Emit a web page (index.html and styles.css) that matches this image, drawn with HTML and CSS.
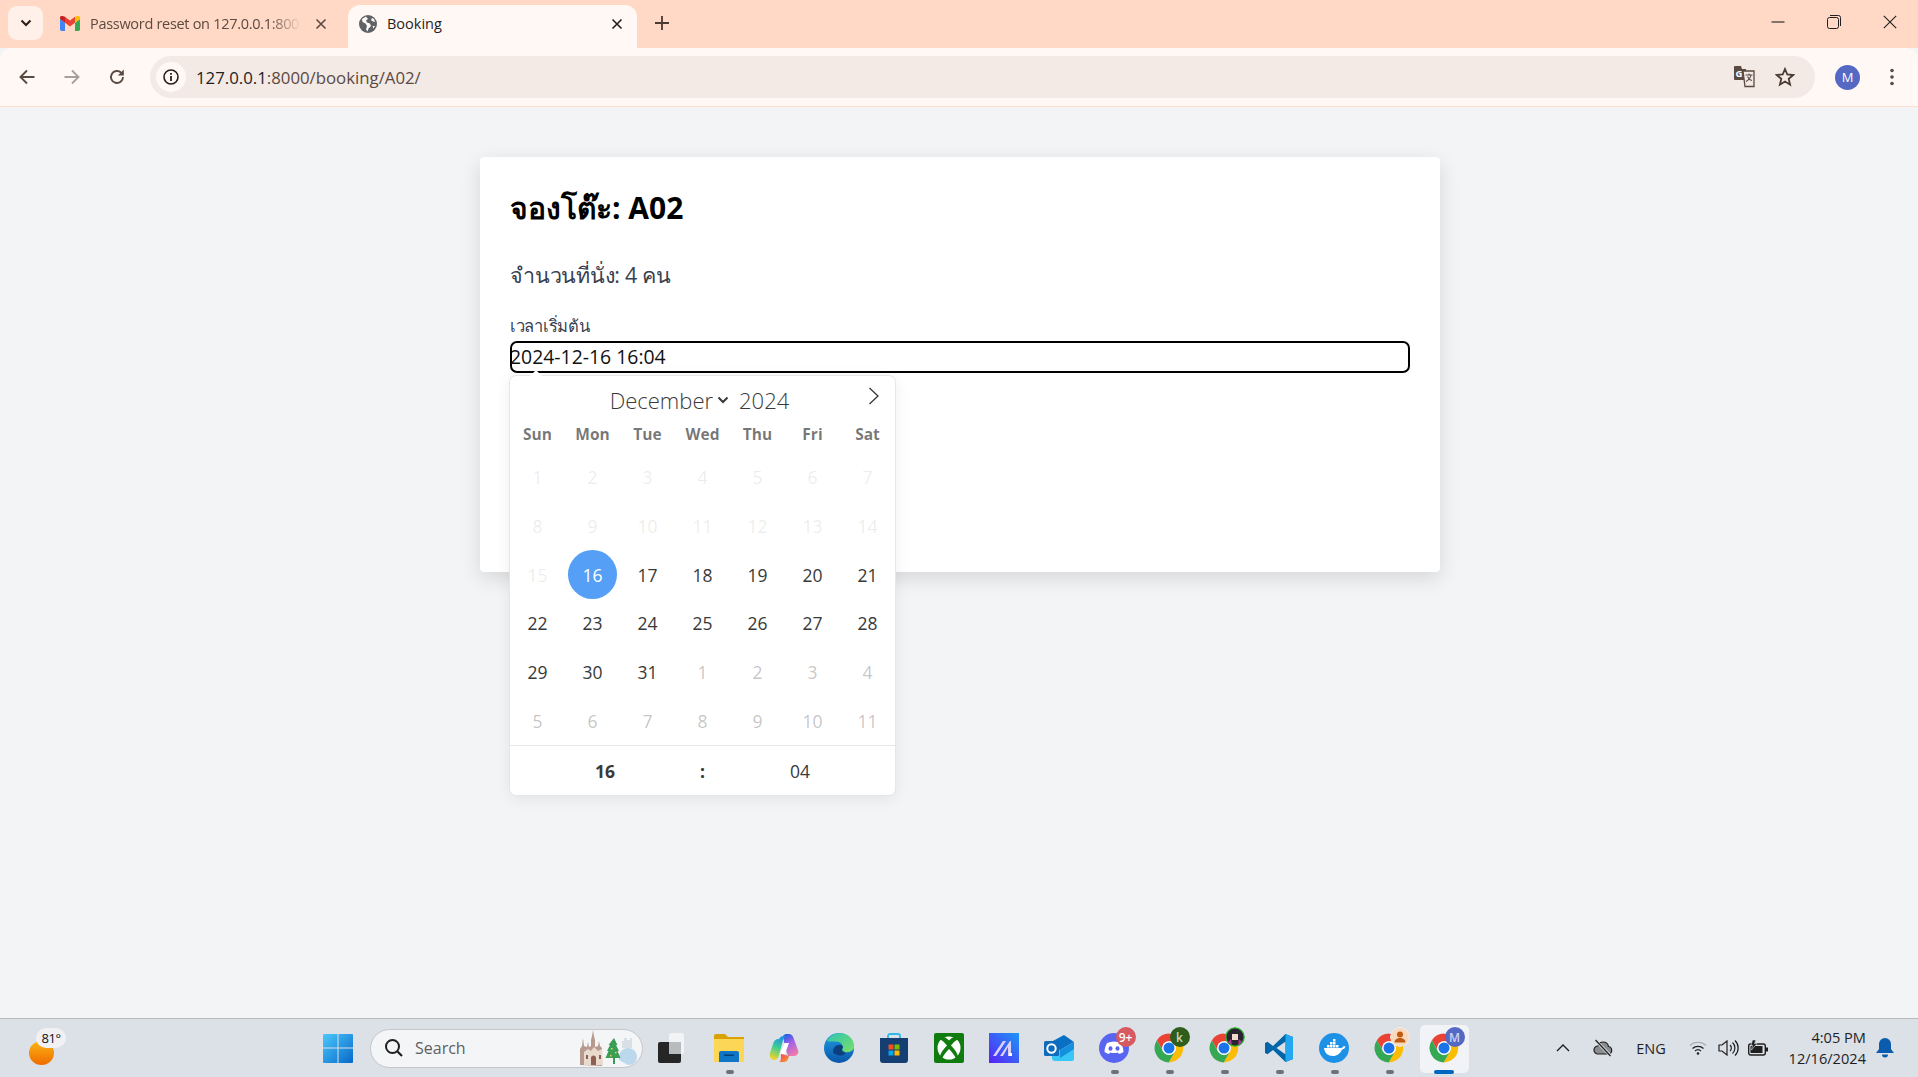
FILE: index.html
```html
<!DOCTYPE html>
<html lang="th">
<head>
    <meta charset="UTF-8">
    <title>Booking</title>
    <link rel="stylesheet" href="styles.css">
</head>
<body>
    <svg class="defs" width="0" height="0">
        <symbol id="chrome" viewBox="0 0 48 48">
            <path fill="#ea4335" d="M24 1A23 23 0 0 0 4.6 11.6L14.5 29A11 11 0 0 1 24 13H44A23 23 0 0 0 24 1Z"/>
            <path fill="#fbbc04" d="M44 13H24A11 11 0 0 1 33.5 29.5L23.5 47A23 23 0 0 0 44 13Z"/>
            <path fill="#34a853" d="M4.6 11.6A23 23 0 0 0 23.5 47L33.5 29.5A11 11 0 0 1 14.5 29.5Z"/>
            <circle cx="24" cy="24" r="11" fill="#fff"/>
            <circle cx="24" cy="24" r="8.8" fill="#1a73e8"/>
        </symbol>
    </svg>

    <header class="tabstrip">
        <button class="tab-search">
            <svg width="12" height="8" viewBox="0 0 12 8"><path d="M1.5 1.5 6 6l4.5-4.5" fill="none" stroke="#2b1d16" stroke-width="2"/></svg>
        </button>
        <div class="tab">
            <svg class="tab-icon gmail" width="20" height="15" viewBox="0 0 24 18">
                <path fill="#4285f4" d="M2 18h4V8L0 3.5V16a2 2 0 0 0 2 2z"/>
                <path fill="#34a853" d="M18 18h4a2 2 0 0 0 2-2V3.5L18 8z"/>
                <path fill="#fbbc04" d="M18 1v7l6-4.5V2c0-2-2.3-3-3.8-1.8z"/>
                <path fill="#ea4335" d="M6 8V1l6 4.5L18 1v7l-6 4.5z"/>
                <path fill="#c5221f" d="M0 2v1.5L6 8V1L3.8.2C2.3-1 0 0 0 2z"/>
            </svg>
            <span class="tab-title fade">Password reset on 127.0.0.1:800</span>
            <svg class="tab-close" width="12" height="12" viewBox="0 0 12 12"><path d="M1.5 1.5l9 9m0-9l-9 9" stroke="#5b4a42" stroke-width="1.6"/></svg>
        </div>
        <div class="tab active">
            <svg class="tab-icon" width="18" height="18" viewBox="0 0 18 18">
                <circle cx="9" cy="9" r="9" fill="#5f6368"/>
                <path fill="#fff8f5" d="M7 1.5 3 4l.5 3 3 1.5L8 11l-1 3.5 1.5 2 1-3 2.5-2.5-1-2.5-3-1-1-2 2-1.5zM13 3l-1 2 2 1.5 2 .5-1-3zM13.5 11l1 2.5 1.5-2.5z"/>
            </svg>
            <span class="tab-title">Booking</span>
            <svg class="tab-close" width="12" height="12" viewBox="0 0 12 12"><path d="M1.5 1.5l9 9m0-9l-9 9" stroke="#1f1f1f" stroke-width="1.6"/></svg>
        </div>
        <svg class="new-tab" width="14" height="14" viewBox="0 0 14 14"><path d="M7 0v14M0 7h14" stroke="#4a3a32" stroke-width="1.8"/></svg>
        <div class="window-controls">
            <svg width="14" height="14" viewBox="0 0 14 14"><path d="M.5 7h13" stroke="#1f1f1f" stroke-width="1.1"/></svg>
            <svg width="14" height="14" viewBox="0 0 14 14"><rect x=".5" y="2.5" width="11" height="11" rx="2" fill="none" stroke="#1f1f1f"/><path d="M3 .5h8.5a2 2 0 0 1 2 2V11" fill="none" stroke="#1f1f1f"/></svg>
            <svg width="14" height="14" viewBox="0 0 14 14"><path d="M.8.8l12.4 12.4m0-12.4L.8 13.2" stroke="#1f1f1f" stroke-width="1.1"/></svg>
        </div>
    </header>

    <nav class="toolbar">
        <svg class="nav-btn" width="18" height="18" viewBox="0 0 18 18"><path d="M16.5 9H2.5M9 2.500 2.500 9 9 15.5" fill="none" stroke="#5b4a42" stroke-width="1.9"/></svg>
        <svg class="nav-btn" width="18" height="18" viewBox="0 0 18 18"><path d="M1.5 9h14M9 2.500 15.5 9 9 15.5" fill="none" stroke="#a99f9a" stroke-width="1.9"/></svg>
        <svg class="nav-btn" width="18" height="18" viewBox="0 0 18 18"><path d="M15 9a6 6 0 1 1-1.8-4.300L15 6.500" fill="none" stroke="#5b4a42" stroke-width="1.9"/><path d="M15.8 1.5v6h-6z" fill="#5b4a42"/></svg>
        <div class="omnibox">
            <span class="site-info">
                <svg width="16" height="16" viewBox="0 0 16 16"><circle cx="8" cy="8" r="7" fill="none" stroke="#2b1d16" stroke-width="1.6"/><path d="M8 7v5M8 4v1.8" stroke="#2b1d16" stroke-width="1.8"/></svg>
            </span>
            <span class="url"><b>127.0.0.1</b>:8000/booking/A02/</span>
            <svg class="omni-icon translate" width="22" height="22" viewBox="0 0 22 22">
                <path fill="#5b4a42" d="M1 1a1 1 0 0 1 1-1h6l1 3h4l1 11H2a1 1 0 0 1-1-1z"/>
                <text x="2.5" y="11" class="translate-g">G</text>
                <path fill="#f3e9e5" stroke="#5b4a42" stroke-width="1.3" d="M10 5h11v15.5H12z"/>
                <path d="M12.500 9h7m-3.500-1.500V9m2 0c-.5 3-2.500 5-5 6.500m1.500-5c.8 2 2.500 3.500 4.500 4" fill="none" stroke="#5b4a42" stroke-width="1.1"/>
            </svg>
            <svg class="omni-icon star" width="20" height="20" viewBox="0 0 20 20"><path d="M10 2l2.300 5.500 5.900.5-4.500 3.900 1.400 5.800L10 14.600l-5.100 3.100 1.400-5.800L1.800 8l5.900-.5z" fill="none" stroke="#4a3a32" stroke-width="1.8"/></svg>
        </div>
        <span class="avatar">M</span>
        <svg class="kebab" width="4" height="18" viewBox="0 0 4 18"><circle cx="2" cy="2.5" r="1.8" fill="#5b4a42"/><circle cx="2" cy="9" r="1.8" fill="#5b4a42"/><circle cx="2" cy="15.5" r="1.8" fill="#5b4a42"/></svg>
    </nav>

    <main class="page">
        <section class="card">
            <h1 class="card-title">จองโต๊ะ: A02</h1>
            <p class="seats">จำนวนที่นั่ง: 4 คน</p>
            <label class="field-label">เวลาเริ่มต้น</label>
            <div class="field">
                <div class="date-input">2024-12-16 16:04</div>
                <div class="calendar">
                    <div class="cal-month">
                        <span class="cal-name">December</span>
                        <svg class="cal-caret" width="12" height="8" viewBox="0 0 12 8"><path d="M1.5 1.5 6 6l4.5-4.5" fill="none" stroke="#393939" stroke-width="2"/></svg>
                        <span class="cal-name">2024</span>
                        <svg class="cal-next" width="12" height="20" viewBox="0 0 12 20"><path d="M1.5 2l8.500 8-8.500 8" fill="none" stroke="#393939" stroke-width="1.3"/></svg>
                    </div>
                    <div class="cal-weekdays">
                        <span>Sun</span><span>Mon</span><span>Tue</span><span>Wed</span><span>Thu</span><span>Fri</span><span>Sat</span>
                    </div>
                    <div class="cal-days">
                        <span class="off">1</span><span class="off">2</span><span class="off">3</span><span class="off">4</span><span class="off">5</span><span class="off">6</span><span class="off">7</span>
                        <span class="off">8</span><span class="off">9</span><span class="off">10</span><span class="off">11</span><span class="off">12</span><span class="off">13</span><span class="off">14</span>
                        <span class="off">15</span><span class="selected">16</span><span>17</span><span>18</span><span>19</span><span>20</span><span>21</span>
                        <span>22</span><span>23</span><span>24</span><span>25</span><span>26</span><span>27</span><span>28</span>
                        <span>29</span><span>30</span><span>31</span><span class="next">1</span><span class="next">2</span><span class="next">3</span><span class="next">4</span>
                        <span class="next">5</span><span class="next">6</span><span class="next">7</span><span class="next">8</span><span class="next">9</span><span class="next">10</span><span class="next">11</span>
                    </div>
                    <div class="cal-time">
                        <b>16</b><b>:</b><span>04</span>
                    </div>
                </div>
            </div>
        </section>
    </main>

    <footer class="taskbar">
        <div class="weather">
            <svg width="25" height="24" viewBox="0 0 25 24">
                <defs><linearGradient id="sun" x1="0" y1="0" x2="0" y2="1"><stop offset="0" stop-color="#fbb515"/><stop offset="1" stop-color="#ef6c00"/></linearGradient></defs>
                <ellipse cx="12.5" cy="12" rx="12.5" ry="12" fill="url(#sun)"/>
            </svg>
            <span class="weather-temp">81°</span>
        </div>

        <div class="task-item start">
            <svg width="30" height="30" viewBox="0 0 30 30">
                <defs><linearGradient id="win" x1="0" y1="0" x2="1" y2="1"><stop offset="0" stop-color="#4cc7fb"/><stop offset="1" stop-color="#0669c9"/></linearGradient></defs>
                <path fill="url(#win)" d="M1 1h13.5v13.5H0V2a1 1 0 0 1 1-1zM15.5 1H29a1 1 0 0 1 1 1v12.500H15.500zM0 15.500h14.500V30H1a1 1 0 0 1-1-1zM15.500 15.500H30V29a1 1 0 0 1-1 1H15.500z"/>
            </svg>
        </div>

        <div class="search">
            <svg width="20" height="20" viewBox="0 0 20 20"><circle cx="8.5" cy="8.5" r="6.5" fill="none" stroke="#1f1f1f" stroke-width="2"/><path d="M13.5 13.500 18 18" stroke="#1f1f1f" stroke-width="2.2"/></svg>
            <span class="search-text">Search</span>
            <svg class="search-art" width="60" height="36" viewBox="0 0 60 36">
                <path fill="#b79a8e" d="M2 35V19l2-3 1-8 1 8 3 1 1-5 1 5 2-1V10l1-4 1-6 1 6 1 4v7l3-1 1-5 1 5 2 2v18z"/>
                <path fill="#ead9cd" d="M6 35V22l4-3 3 2 3-4 4 4 4-2 1 16z"/>
                <path fill="#8f5f52" d="M13 35v-7a2.500 2.500 0 0 1 5 0v7zM8 25h2v4H8zM21 25h2v4h-2z"/>
                <path fill="#bcd8ec" d="M41 30c-1-7 3-12 9-12 5 0 9 4 9 9 0 5-4 8-9 8z"/>
                <path fill="#d9dfe6" d="M44 11h2V8h3v2h3V8h2v10H44z"/>
                <path fill="#3c9d55" d="M36 8l3.500 7h-1.500l3 6h-1.500l3 7H37v6h-2v-6h-7.500l3-7H29l3-6h-1.500z"/>
                <path fill="#e9d25a" d="M33 18h1.500v1.500H33zM37 22h1.500v1.500H37zM32 25h1.500v1.500H32z"/>
            </svg>
        </div>

        <div class="task-item taskview">
            <svg width="26" height="30" viewBox="0 0 26 30">
                <rect x="11" y="0" width="15" height="21" rx="2" fill="#f2f3f5"/>
                <rect x="0" y="9" width="23" height="21" rx="2" fill="#262626"/>
                <rect x="11" y="9" width="12" height="12" fill="#b9bcbf"/>
            </svg>
        </div>

        <div class="task-item running">
            <svg width="30" height="28" viewBox="0 0 30 28">
                <path fill="#d9a204" d="M0 2a2 2 0 0 1 2-2h9l3 3h16v5H0z"/>
                <path fill="#fcd757" d="M0 5h30v23H0z"/>
                <path fill="#0f75c6" d="M5 19a2 2 0 0 1 2-2h16a2 2 0 0 1 2 2v9H5z"/>
                <path fill="#073f78" d="M10 20.500h10v1.500H10z"/>
            </svg>
        </div>
        <div class="task-item">
            <svg width="30" height="30" viewBox="0 0 30 30">
                <defs>
                    <linearGradient id="cop-a" x1="0.6" y1="0" x2="0.3" y2="1"><stop offset="0" stop-color="#1a8ff0"/><stop offset="0.5" stop-color="#3ed08f"/><stop offset="1" stop-color="#f5d428"/></linearGradient>
                    <linearGradient id="cop-b" x1="0.3" y1="0" x2="0.7" y2="1"><stop offset="0" stop-color="#2a5fe0"/><stop offset="0.4" stop-color="#a160ea"/><stop offset="1" stop-color="#f27ca8"/></linearGradient>
                    <linearGradient id="cop-c" x1="0" y1="0" x2="1" y2="1"><stop offset="0" stop-color="#f23f50"/><stop offset="1" stop-color="#f9a030"/></linearGradient>
                </defs>
                <path fill="url(#cop-b)" d="M14 3c1-1.500 2.500-2 4-2h2c2 0 3.500 1 4.500 4L29 17c1 3.500-1 6-4 6h-6l-3-9z"/>
                <path fill="url(#cop-c)" d="M12 21l8 2-1 3c-.7 2-2 3-4 3h-5c2.500 0 2-6 2-8z"/>
                <path fill="url(#cop-a)" d="M10 6c1-2 2.500-3 4.500-3h4c-2 0-3.500 1-4.500 4l-4 15c-.7 3-2.500 5-5 5-3 0-5-3-4-7l3-9C4.500 8 6.500 6 10 6z"/>
                <path fill="#fff" d="M15.500 10H20l-4 11h-5z"/>
            </svg>
        </div>
        <div class="task-item">
            <svg width="30" height="30" viewBox="0 0 30 30">
                <defs>
                    <linearGradient id="edge" x1="0" y1="0" x2="1" y2="1"><stop offset="0" stop-color="#31c5b0"/><stop offset="1" stop-color="#7adf68"/></linearGradient>
                    <linearGradient id="edge2" x1="0" y1="0" x2="0" y2="1"><stop offset="0" stop-color="#1f9ee6"/><stop offset="1" stop-color="#0a55a8"/></linearGradient>
                </defs>
                <circle cx="15" cy="15" r="15" fill="url(#edge2)"/>
                <path fill="url(#edge)" d="M3 8C7 0 18-2 25 3c4 3 5.500 8 5 12-1 3-5 5-9 4-3-1-4-2-3-4 1-2 0-5-3-6-4-1-9 0-12-1z"/>
                <path fill="#0c3f7e" d="M9 19c0-5 4-8 8-7 2 .5 2.500 2 1.500 3.500-1 2 0 4 3 4.500-2 3-6 3-8 2-2-.5-4-1-4.500-3z"/>
            </svg>
        </div>
        <div class="task-item">
            <svg width="30" height="30" viewBox="0 0 30 30">
                <path fill="none" stroke="#2fb8ea" stroke-width="1.8" d="M9 7V3a2 2 0 0 1 2-2h8a2 2 0 0 1 2 2v4"/>
                <path fill="#153f73" d="M1 5h28v22a3 3 0 0 1-3 3H4a3 3 0 0 1-3-3z"/>
                <path fill="#f25022" d="M9.500 11.500h5v5h-5z"/>
                <path fill="#7fba00" d="M15.500 11.500h5v5h-5z"/>
                <path fill="#00a4ef" d="M9.500 17.500h5v5h-5z"/>
                <path fill="#ffb900" d="M15.500 17.500h5v5h-5z"/>
            </svg>
        </div>
        <div class="task-item">
            <svg width="30" height="30" viewBox="0 0 30 30">
                <rect width="30" height="30" rx="2" fill="#107c10"/>
                <circle cx="15" cy="15" r="11.5" fill="#fff"/>
                <path fill="#107c10" d="M8 3.500c2.500 0 5 2 7 4 2-2 4.500-4 7-4l3 2.500c-2 0-6 4-8 6.500 3 3 6.500 7.500 7 11l-2 2c-2-4-5-7.500-7-9.500-2 2-5 5.500-7 9.500l-2-2c.5-3.500 4-8 7-11C11 10 7 6 5 6z"/>
            </svg>
        </div>
        <div class="task-item">
            <svg width="30" height="30" viewBox="0 0 30 30">
                <defs><linearGradient id="ma" x1="0" y1="1" x2="1" y2="0"><stop offset="0" stop-color="#5a22f5"/><stop offset="1" stop-color="#1c97f8"/></linearGradient></defs>
                <rect width="30" height="30" fill="url(#ma)"/>
                <path fill="#d9d3fb" d="M4 23 14 8h3L7 23zM11 23 21 8h1v15h-3v-9l-5 9z"/>
                <path fill="#fff" d="M20 20h3v3h-3z"/>
            </svg>
        </div>
        <div class="task-item">
            <svg width="30" height="26" viewBox="0 0 30 26">
                <path fill="#38c6f4" d="M7 14h23v10a2 2 0 0 1-2 2H11a3 3 0 0 1-3-3z"/>
                <path fill="#0a70c4" d="M7 7 20 0l10 7-14 8-9-4z"/>
                <path fill="#1490df" d="M16 15 30 7v7l-14 9z"/>
                <rect x="0" y="6" width="15" height="15" rx="1.5" fill="#0f6cbd"/>
                <circle cx="7.5" cy="13.5" r="4.2" fill="none" stroke="#fff" stroke-width="2"/>
            </svg>
        </div>

        <div class="task-item running">
            <svg width="30" height="30" viewBox="0 0 30 30">
                <circle cx="15" cy="15" r="15" fill="#5865f2"/>
                <path fill="#fff" d="M8 10c4.500-2 9.500-2 14 0 1.500 3 2.500 6 2.500 9-1.500 1-3 1.600-4.500 2l-1-1.600c-2.500.7-5.500.7-8 0L10 21c-1.500-.4-3-1-4.500-2 0-3 1-6 2.500-9z"/>
                <ellipse cx="11.5" cy="15.5" rx="2" ry="2.3" fill="#5865f2"/>
                <ellipse cx="18.5" cy="15.5" rx="2" ry="2.3" fill="#5865f2"/>
            </svg>
            <span class="task-badge red">9+</span>
        </div>
        <div class="task-item running">
            <svg width="30" height="30"><use href="#chrome"/></svg>
            <span class="task-badge green">k</span>
        </div>
        <div class="task-item running">
            <svg width="30" height="30"><use href="#chrome"/></svg>
            <svg class="task-badge" width="20" height="20" viewBox="0 0 20 20">
                <circle cx="10" cy="10" r="10" fill="#2fb52f"/>
                <circle cx="10" cy="10" r="8.5" fill="#2a2430"/>
                <path fill="#f0d9cf" d="M7 7h6v6H7z"/>
                <path fill="#b8329e" d="M3 15l3-3 1 6zM17 15l-3-3-1 6z"/>
            </svg>
        </div>
        <div class="task-item running">
            <svg width="30" height="30" viewBox="0 0 30 30">
                <path fill="#0065a9" d="M21.500 1 9 13 3.500 8.700 1 10v10l2.500 1.300L9 17l12.500 12 7.500-3V4zM21.500 8.500v13L12.500 15z"/>
                <path fill="#23a8f0" d="M21.500 1 29 4v22l-7.500 3z"/>
            </svg>
        </div>
        <div class="task-item running">
            <svg width="30" height="30" viewBox="0 0 30 30">
                <circle cx="15" cy="15" r="15" fill="#1d91e6"/>
                <path fill="#fff" d="M5 15h18c.5-1.500 2-2 3.500-1.500-.5 2-2 3-3.500 3-1.500 4-5 6.500-9 6.500-5 0-8.500-3-9-8z"/>
                <path fill="#fff" d="M8 12h2.500v2.500H8zM11 12h2.500v2.500H11zM14 12h2.500v2.500H14zM11 9h2.500v2.500H11zM14 9h2.500v2.500H14zM14 6h2.500v2.500H14zM17 12h2.500v2.500H17z"/>
            </svg>
        </div>
        <div class="task-item running">
            <svg width="30" height="30"><use href="#chrome"/></svg>
            <svg class="task-badge" width="20" height="20" viewBox="0 0 20 20">
                <circle cx="10" cy="10" r="9.5" fill="#f8d9bd" stroke="#efefef"/>
                <circle cx="10" cy="7.5" r="3" fill="#c25a10"/>
                <path fill="#c25a10" d="M4.500 15.500c0-3 2.500-4.500 5.500-4.500s5.500 1.500 5.500 4.500z"/>
            </svg>
        </div>
        <div class="task-item active-app">
            <svg width="30" height="30"><use href="#chrome"/></svg>
            <span class="task-badge indigo">M</span>
        </div>

        <div class="tray">
            <svg class="tray-icon wide" width="14" height="8" viewBox="0 0 14 8"><path d="M1 7l6-6 6 6" fill="none" stroke="#1f1f1f" stroke-width="1.4"/></svg>
            <svg class="tray-icon wide" width="20" height="18" viewBox="0 0 20 18"><path d="M5 15a4 4 0 0 1 0-8c1-3 3-4 5-4 3 0 5 2 5.500 4.500a3.800 3.800 0 0 1 0 7.500z" fill="#8b8e91" stroke="#1f1f1f" stroke-width="1.2"/><path d="M2 1l16 16" stroke="#dde1e8" stroke-width="3"/><path d="M2.500 1l15 16" stroke="#1f1f1f" stroke-width="1.2"/></svg>
            <span class="tray-lang">ENG</span>
            <svg class="tray-icon first" width="18" height="14" viewBox="0 0 18 14"><path d="M1 4.500a11.500 11.500 0 0 1 16 0" fill="none" stroke="#a5a7ab" stroke-width="1.1"/><path d="M3.500 7.500a8 8 0 0 1 11 0M6 10a4.500 4.500 0 0 1 6 0" fill="none" stroke="#1f1f1f" stroke-width="1.2"/><circle cx="9" cy="12.5" r="1.3" fill="#1f1f1f"/></svg>
            <svg class="tray-icon" width="20" height="18" viewBox="0 0 20 18"><path d="M1 6h3l5-4v14l-5-4H1z" fill="none" stroke="#1f1f1f" stroke-width="1.2"/><path d="M12 6a4 4 0 0 1 0 6M14.500 3.500a7.500 7.500 0 0 1 0 11M17 1.500a10.500 10.500 0 0 1 0 15" fill="none" stroke="#1f1f1f" stroke-width="1.2"/></svg>
            <svg class="tray-icon" width="20" height="16" viewBox="0 0 20 16"><rect x=".7" y="4" width="16.6" height="11" rx="2" fill="none" stroke="#1f1f1f" stroke-width="1.4"/><path d="M2.500 6h12v7h-12z" fill="#1f1f1f"/><path d="M18 7.500h2v4h-2z" fill="#1f1f1f"/><path d="M4.500 0h3.500L6.500 3.500H9L3.500 10l1-4.500H3z" fill="#1f1f1f" stroke="#dce0e7" stroke-width=".6"/></svg>
            <div class="clock">
                <span>4:05 PM</span>
                <span>12/16/2024</span>
            </div>
            <svg class="bell" width="18" height="20" viewBox="0 0 18 20"><path d="M9 0a6 6 0 0 1 6 6v5l3 4H0l3-4V6a6 6 0 0 1 6-6z" fill="#0b5cad"/><path d="M6 16.500h6a3 3 0 0 1-6 0z" fill="#0b5cad"/></svg>
        </div>
    </footer>
</body>
</html>
```

FILE: styles.css
```css
* {
    box-sizing: border-box;
}

body {
    display: flex;
    flex-direction: column;
    height: 100vh;
    margin: 0;
    overflow: hidden;
    font-family: "Open Sans", "Noto Sans", sans-serif;
    background-color: #f3f4f6;
    color: #1f1f1f;
}

.defs {
    position: absolute;
}

/* browser chrome */

.tabstrip {
    display: flex;
    align-items: flex-end;
    height: 48px;
    padding-left: 8px;
    background-color: #ffd9c6;
}

.tab-search {
    display: flex;
    align-items: center;
    justify-content: center;
    width: 35px;
    height: 34px;
    margin-bottom: 8px;
    border: none;
    border-radius: 9px;
    background-color: #fff0ea;
}

.tab {
    display: flex;
    align-items: center;
    width: 305px;
    height: 43px;
    padding: 0 0 6px 17px;
    font-size: 14.5px;
    color: #5b4a42;
}

.tab-title {
    width: 211px;
    margin-left: 10px;
    white-space: nowrap;
}

.tab-title.fade {
    letter-spacing: -0.3px;
    -webkit-mask-image: linear-gradient(to right, #000 85%, transparent);
    mask-image: linear-gradient(to right, #000 85%, transparent);
}

.tab-close {
    margin-left: 14px;
}

.tab.active {
    width: 289px;
    padding-left: 11px;
    border-radius: 12px 12px 0 0;
    background-color: #fff8f5;
    color: #1f1f1f;
}

.tab.active .tab-title {
    width: 210px;
}

.new-tab {
    margin: 0 0 18px 18px;
}

.window-controls {
    display: flex;
    align-items: center;
    gap: 42px;
    margin: 0 21px 19px auto;
}

.toolbar {
    display: flex;
    align-items: center;
    height: 59px;
    padding-left: 18px;
    border-bottom: 1px solid #fadfd0;
    border-radius: 12px 12px 0 0;
    background-color: #fff8f5;
}

.nav-btn {
    margin-right: 27px;
}

.nav-btn + .nav-btn + .nav-btn {
    margin-right: 24px;
}

.omnibox {
    display: flex;
    align-items: center;
    width: 1665px;
    height: 42px;
    padding-left: 6px;
    border-radius: 21px;
    background-color: #f3e9e5;
}

.site-info {
    display: flex;
    align-items: center;
    justify-content: center;
    width: 30px;
    height: 30px;
    border-radius: 50%;
    background-color: #fff8f5;
}

.url {
    margin-left: 10px;
    font-size: 16.8px;
    color: #5b4a42;
}

.url b {
    font-weight: 400;
    color: #1f1f1f;
}

.omni-icon.translate {
    margin-left: auto;
}

.translate-g {
    font-family: "Open Sans", sans-serif;
    font-size: 9.5px;
    font-weight: 700;
    fill: #fff;
}

.omni-icon.star {
    margin: 0 20px;
}

.avatar {
    display: flex;
    align-items: center;
    justify-content: center;
    width: 25px;
    height: 25px;
    margin-left: 20px;
    border-radius: 50%;
    background-color: #5468c4;
    color: #fff;
    font-size: 13px;
}

.kebab {
    margin-left: 30px;
}

/* booking page */

.page {
    flex: 1;
    padding: 50px 0 0 2px;
}

.card {
    width: 960px;
    height: 415px;
    margin: 0 auto;
    padding: 30px;
    border-radius: 4px;
    background-color: #fff;
    box-shadow: 0 6px 20px rgba(0, 0, 0, 0.12);
}

.card-title {
    margin: 1px 0 0;
    font-size: 30px;
    line-height: 40px;
    font-weight: 700;
    color: #000;
}

.seats {
    margin: 31px 0 0;
    font-size: 21.5px;
    line-height: 32px;
    letter-spacing: -0.25px;
    color: #374151;
}

.field-label {
    display: block;
    margin-top: 22px;
    font-size: 16.5px;
    line-height: 25px;
    letter-spacing: -0.3px;
    color: #374151;
}

.field {
    position: relative;
}

.date-input {
    height: 32px;
    margin-top: 3px;
    border: 2px solid #000;
    border-radius: 7px;
    font-size: 19.4px;
    line-height: 28px;
    text-indent: -2px;
    color: #111;
}

.calendar {
    position: absolute;
    top: 35px;
    left: 0;
    width: 385px;
    border-radius: 6px;
    background-color: #fff;
    color: #393939;
    box-shadow: 1px 0 0 #e6e6e6, -1px 0 0 #e6e6e6, 0 1px 0 #e6e6e6, 0 -1px 0 #e6e6e6, 0 3px 16px rgba(0, 0, 0, 0.08);
}

.calendar::before {
    content: "";
    position: absolute;
    top: -6px;
    left: 20px;
    border: 6px solid transparent;
    border-top: none;
    border-bottom-color: #fff;
}

.cal-month {
    position: relative;
    display: flex;
    align-items: center;
    justify-content: center;
    height: 44px;
    padding: 3px 6px 0 0;
}

.cal-name {
    font-size: 22px;
    font-weight: 300;
}

.cal-caret {
    margin: 0 10px 0 4px;
}

.cal-next {
    position: absolute;
    top: 10px;
    right: 15px;
}

.cal-weekdays,
.cal-days {
    display: grid;
    grid-template-columns: repeat(7, 55px);
    text-align: center;
}

.cal-weekdays {
    height: 33px;
    padding-bottom: 5px;
    align-items: center;
    font-size: 15.5px;
    font-weight: 700;
    color: rgba(0, 0, 0, 0.54);
}

.cal-days {
    grid-auto-rows: 48.7px;
    font-size: 17.5px;
}

.cal-days span {
    display: flex;
    align-items: center;
    justify-content: center;
    margin: 0 3px;
}

.cal-days .off {
    color: rgba(57, 57, 57, 0.1);
}

.cal-days .next {
    color: rgba(57, 57, 57, 0.3);
}

.cal-days .selected {
    border-radius: 50%;
    background-color: #569ff7;
    color: #fff;
}

.cal-time {
    display: grid;
    grid-template-columns: 190px 5px 190px;
    align-items: center;
    height: 50px;
    border-top: 1px solid #e6e6e6;
    font-size: 17.5px;
    text-align: center;
}

.cal-time b {
    font-weight: 700;
}

/* windows taskbar */

.taskbar {
    display: flex;
    align-items: center;
    height: 59px;
    padding: 0 18px 0 0;
    border-top: 1px solid #b7b9bd;
    background-color: #dce0e7;
}

.weather {
    position: relative;
    display: flex;
    width: 310px;
    padding: 10px 0 0 29px;
}

.weather-temp {
    position: absolute;
    top: -3px;
    left: 36px;
    width: 30px;
    border-radius: 10px;
    background-color: #f1f1f3;
    font-size: 13px;
    line-height: 20px;
    letter-spacing: -0.4px;
    text-align: center;
    color: #111;
}

.task-item {
    position: relative;
    flex: none;
    display: flex;
    align-items: center;
    justify-content: center;
    width: 55px;
    height: 58px;
}

.task-item.start {
    margin-right: 5px;
}

.task-item.taskview {
    margin-right: 3.5px;
}

.task-item.running::after,
.task-item.active-app::after {
    content: "";
    position: absolute;
    bottom: 3px;
    left: 24px;
    width: 8px;
    height: 4px;
    border-radius: 2px;
    background-color: #6f7175;
}

.task-item.active-app::before {
    content: "";
    position: absolute;
    top: 6px;
    left: 3px;
    width: 49px;
    height: 48px;
    border-radius: 5px;
    background-color: #f1f3f6;
}

.task-item.active-app svg {
    position: relative;
}

.task-item.active-app::after {
    left: 17px;
    width: 20px;
    background-color: #0067c0;
}

.task-badge {
    position: absolute;
    top: 8px;
    left: 28px;
    display: flex;
    align-items: center;
    justify-content: center;
    width: 20px;
    height: 20px;
    border-radius: 50%;
    font-size: 12px;
    font-weight: 600;
}

.task-badge.red {
    left: 29px;
    background-color: #d65a5f;
    color: #fff;
}

.task-badge.green {
    background-color: #2f5d1b;
    color: #c8d8bc;
}

.task-badge.indigo {
    background-color: #5468c4;
    color: #cdd5f0;
}

.search {
    flex: none;
    display: flex;
    align-items: center;
    width: 273px;
    height: 39px;
    padding-left: 13px;
    border: 1px solid #c4c6ca;
    border-radius: 20px;
    background-color: #f4f5f7;
}

.search-text {
    margin-left: 11px;
    font-size: 16px;
    color: #5f6062;
}

.search-art {
    margin-left: auto;
    margin-right: 4px;
}

.tray {
    display: flex;
    align-items: center;
    margin-left: auto;
}

.tray-icon {
    flex: none;
    width: 30px;
}

.tray-icon.wide {
    width: 40px;
}

.tray-icon.first {
    margin-left: 4px;
}

.tray-lang {
    width: 56px;
    font-size: 14.5px;
    text-align: center;
}

.clock {
    display: flex;
    flex-direction: column;
    width: 93px;
    font-size: 14.6px;
    line-height: 21px;
    text-align: right;
}

.bell {
    width: 30px;
    margin-left: 4px;
}
```
